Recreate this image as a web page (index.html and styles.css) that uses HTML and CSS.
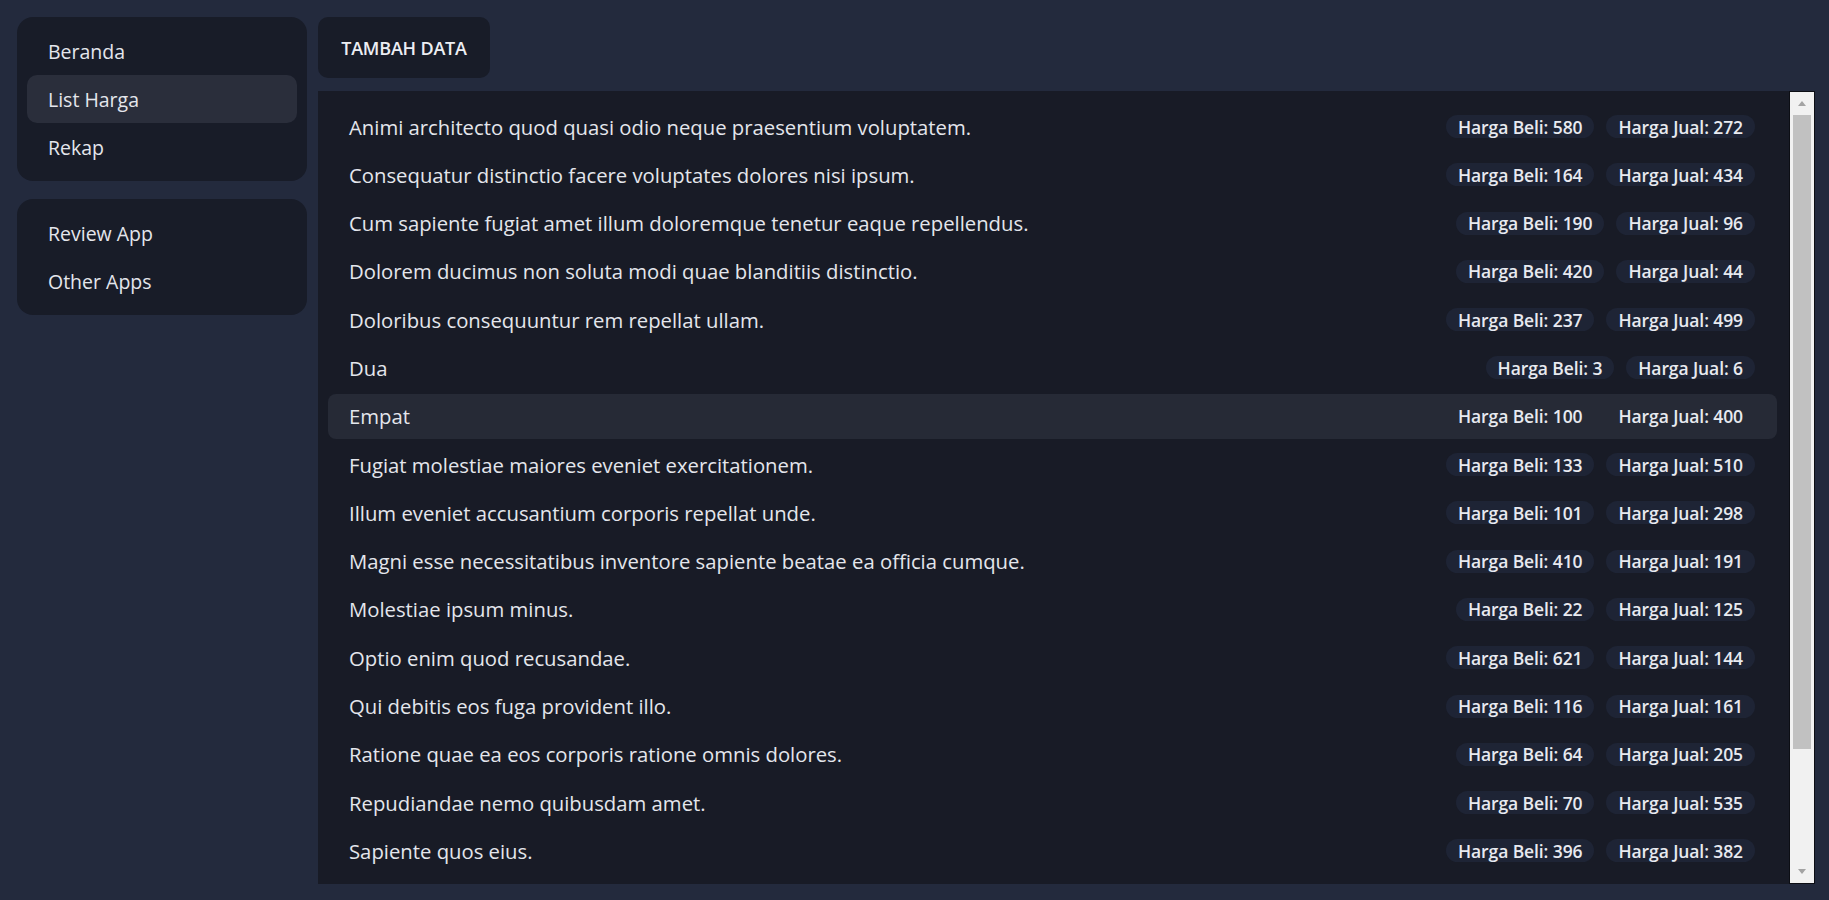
FILE: index.html
```html
<!DOCTYPE html>
<html lang="id">
<head>
<meta charset="utf-8">
<title>List Harga</title>
<link rel="stylesheet" href="styles.css">
</head>
<body>
<aside class="sidebar">
  <nav class="card">
    <a class="nav-item">Beranda</a>
    <a class="nav-item active">List Harga</a>
    <a class="nav-item">Rekap</a>
  </nav>
  <nav class="card">
    <a class="nav-item">Review App</a>
    <a class="nav-item">Other Apps</a>
  </nav>
</aside>
<main class="main">
  <button class="btn">TAMBAH DATA</button>
  <section class="panel">
    <ul class="list">
      <li class="row"><span class="name">Animi architecto quod quasi odio neque praesentium voluptatem.</span><span class="tags"><span class="pill">Harga Beli: 580</span><span class="pill">Harga Jual: 272</span></span></li>
      <li class="row"><span class="name">Consequatur distinctio facere voluptates dolores nisi ipsum.</span><span class="tags"><span class="pill">Harga Beli: 164</span><span class="pill">Harga Jual: 434</span></span></li>
      <li class="row"><span class="name">Cum sapiente fugiat amet illum doloremque tenetur eaque repellendus.</span><span class="tags"><span class="pill">Harga Beli: 190</span><span class="pill">Harga Jual: 96</span></span></li>
      <li class="row"><span class="name">Dolorem ducimus non soluta modi quae blanditiis distinctio.</span><span class="tags"><span class="pill">Harga Beli: 420</span><span class="pill">Harga Jual: 44</span></span></li>
      <li class="row"><span class="name">Doloribus consequuntur rem repellat ullam.</span><span class="tags"><span class="pill">Harga Beli: 237</span><span class="pill">Harga Jual: 499</span></span></li>
      <li class="row"><span class="name">Dua</span><span class="tags"><span class="pill">Harga Beli: 3</span><span class="pill">Harga Jual: 6</span></span></li>
      <li class="row hover"><span class="name">Empat</span><span class="tags"><span class="pill">Harga Beli: 100</span><span class="pill">Harga Jual: 400</span></span></li>
      <li class="row"><span class="name">Fugiat molestiae maiores eveniet exercitationem.</span><span class="tags"><span class="pill">Harga Beli: 133</span><span class="pill">Harga Jual: 510</span></span></li>
      <li class="row"><span class="name">Illum eveniet accusantium corporis repellat unde.</span><span class="tags"><span class="pill">Harga Beli: 101</span><span class="pill">Harga Jual: 298</span></span></li>
      <li class="row"><span class="name">Magni esse necessitatibus inventore sapiente beatae ea officia cumque.</span><span class="tags"><span class="pill">Harga Beli: 410</span><span class="pill">Harga Jual: 191</span></span></li>
      <li class="row"><span class="name">Molestiae ipsum minus.</span><span class="tags"><span class="pill">Harga Beli: 22</span><span class="pill">Harga Jual: 125</span></span></li>
      <li class="row"><span class="name">Optio enim quod recusandae.</span><span class="tags"><span class="pill">Harga Beli: 621</span><span class="pill">Harga Jual: 144</span></span></li>
      <li class="row"><span class="name">Qui debitis eos fuga provident illo.</span><span class="tags"><span class="pill">Harga Beli: 116</span><span class="pill">Harga Jual: 161</span></span></li>
      <li class="row"><span class="name">Ratione quae ea eos corporis ratione omnis dolores.</span><span class="tags"><span class="pill">Harga Beli: 64</span><span class="pill">Harga Jual: 205</span></span></li>
      <li class="row"><span class="name">Repudiandae nemo quibusdam amet.</span><span class="tags"><span class="pill">Harga Beli: 70</span><span class="pill">Harga Jual: 535</span></span></li>
      <li class="row"><span class="name">Sapiente quos eius.</span><span class="tags"><span class="pill">Harga Beli: 396</span><span class="pill">Harga Jual: 382</span></span></li>
    </ul>
    <div class="scrollbar">
      <div class="sb-btn"><span class="tri-up"></span></div>
      <div class="sb-thumb"></div>
      <div class="sb-track"></div>
      <div class="sb-btn"><span class="tri-down"></span></div>
    </div>
  </section>
</main>
</body>
</html>
```

FILE: styles.css
```css
* { box-sizing: border-box; }

html, body { height: 100%; }

body {
  margin: 0;
  height: 900px;
  background: #232a3d;
  color: #e4e6ec;
  font-family: "Open Sans", "Noto Sans", "Liberation Sans", sans-serif;
  display: flex;
  gap: 11px;
  padding: 17px 14px 16px 17px;
  overflow: hidden;
}

.sidebar {
  width: 290px;
  flex: none;
  display: flex;
  flex-direction: column;
  gap: 18px;
}

.card {
  background: #181c28;
  border-radius: 16px;
  padding: 10px;
  display: flex;
  flex-direction: column;
}

.nav-item {
  height: 48px;
  display: flex;
  align-items: center;
  padding-left: 21px;
  border-radius: 10px;
  font-size: 19.5px;
  color: #e4e6ec;
}

.nav-item.active { background: #2a2e3b; }

.main {
  flex: 1;
  min-width: 0;
  display: flex;
  flex-direction: column;
  gap: 13px;
}

.btn {
  align-self: flex-start;
  height: 61px;
  width: 172px;
  border: none;
  border-radius: 10px;
  background: #181c28;
  color: #eceef3;
  font-family: inherit;
  font-size: 18px;
  font-weight: 600;
  letter-spacing: -0.2px;
  padding: 0;
}

.panel {
  flex: 1;
  min-height: 0;
  background: #181b26;
  display: flex;
}

.list {
  flex: 1;
  list-style: none;
  margin: 0;
  padding: 13px 12px 0 10px;
  overflow: hidden;
  display: flex;
  flex-direction: column;
  gap: 3.3px;
}

.row {
  height: 45px;
  flex: none;
  display: flex;
  align-items: center;
  justify-content: space-between;
  padding: 0 22px 0 21px;
  border-radius: 8px;
}

.row.hover { background: #262a36; }

.name {
  font-size: 20.3px;
  white-space: nowrap;
}

.tags {
  display: flex;
  gap: 12px;
}

.pill {
  height: 23px;
  display: flex;
  align-items: center;
  padding: 0 12px;
  border-radius: 12px;
  background: #1e2435;
  font-size: 17.5px;
  font-weight: 600;
  letter-spacing: -0.1px;
  color: #e8eaf0;
}

.row.hover .pill { background: transparent; }

.scrollbar {
  width: 26px;
  flex: none;
  background: #f1f1f1;
  display: flex;
  flex-direction: column;
  border: 1px solid #0c0e14;
}

.sb-btn {
  height: 23px;
  display: flex;
  align-items: center;
  justify-content: center;
  flex: none;
}

.tri-up {
  width: 0;
  height: 0;
  border-left: 4px solid transparent;
  border-right: 4px solid transparent;
  border-bottom: 5px solid #a3a3a3;
}

.tri-down {
  width: 0;
  height: 0;
  border-left: 4px solid transparent;
  border-right: 4px solid transparent;
  border-top: 5px solid #a3a3a3;
}

.sb-thumb {
  height: 634px;
  margin: 0 3px;
  background: #c1c1c1;
  flex: none;
}

.sb-track { flex: 1; }
```
